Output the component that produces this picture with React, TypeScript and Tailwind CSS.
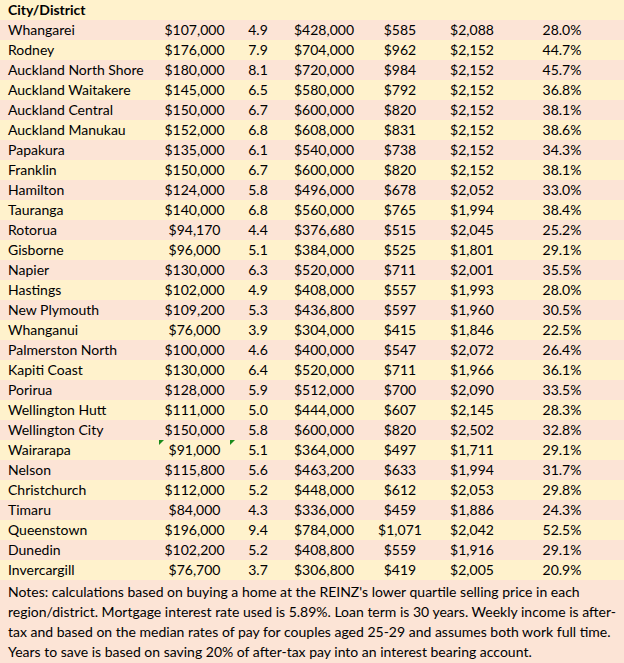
const rows: [string, string, string, string, string, string, string][] = [
  ['Whangarei', '$107,000', '4.9', '$428,000', '$585', '$2,088', '28.0%'],
  ['Rodney', '$176,000', '7.9', '$704,000', '$962', '$2,152', '44.7%'],
  ['Auckland North Shore', '$180,000', '8.1', '$720,000', '$984', '$2,152', '45.7%'],
  ['Auckland Waitakere', '$145,000', '6.5', '$580,000', '$792', '$2,152', '36.8%'],
  ['Auckland Central', '$150,000', '6.7', '$600,000', '$820', '$2,152', '38.1%'],
  ['Auckland Manukau', '$152,000', '6.8', '$608,000', '$831', '$2,152', '38.6%'],
  ['Papakura', '$135,000', '6.1', '$540,000', '$738', '$2,152', '34.3%'],
  ['Franklin', '$150,000', '6.7', '$600,000', '$820', '$2,152', '38.1%'],
  ['Hamilton', '$124,000', '5.8', '$496,000', '$678', '$2,052', '33.0%'],
  ['Tauranga', '$140,000', '6.8', '$560,000', '$765', '$1,994', '38.4%'],
  ['Rotorua', '$94,170', '4.4', '$376,680', '$515', '$2,045', '25.2%'],
  ['Gisborne', '$96,000', '5.1', '$384,000', '$525', '$1,801', '29.1%'],
  ['Napier', '$130,000', '6.3', '$520,000', '$711', '$2,001', '35.5%'],
  ['Hastings', '$102,000', '4.9', '$408,000', '$557', '$1,993', '28.0%'],
  ['New Plymouth', '$109,200', '5.3', '$436,800', '$597', '$1,960', '30.5%'],
  ['Whanganui', '$76,000', '3.9', '$304,000', '$415', '$1,846', '22.5%'],
  ['Palmerston North', '$100,000', '4.6', '$400,000', '$547', '$2,072', '26.4%'],
  ['Kapiti Coast', '$130,000', '6.4', '$520,000', '$711', '$1,966', '36.1%'],
  ['Porirua', '$128,000', '5.9', '$512,000', '$700', '$2,090', '33.5%'],
  ['Wellington Hutt', '$111,000', '5.0', '$444,000', '$607', '$2,145', '28.3%'],
  ['Wellington City', '$150,000', '5.8', '$600,000', '$820', '$2,502', '32.8%'],
  ['Wairarapa', '$91,000', '5.1', '$364,000', '$497', '$1,711', '29.1%'],
  ['Nelson', '$115,800', '5.6', '$463,200', '$633', '$1,994', '31.7%'],
  ['Christchurch', '$112,000', '5.2', '$448,000', '$612', '$2,053', '29.8%'],
  ['Timaru', '$84,000', '4.3', '$336,000', '$459', '$1,886', '24.3%'],
  ['Queenstown', '$196,000', '9.4', '$784,000', '$1,071', '$2,042', '52.5%'],
  ['Dunedin', '$102,200', '5.2', '$408,800', '$559', '$1,916', '29.1%'],
  ['Invercargill', '$76,700', '3.7', '$306,800', '$419', '$2,005', '20.9%'],
];

const notes = [
  "Notes: calculations based on buying a home at the REINZ's lower quartile selling price in each",
  'region/district. Mortgage interest rate used is 5.89%. Loan term is 30 years. Weekly income is after-',
  'tax and based on the median rates of pay for couples aged 25-29 and assumes both work full time.',
  'Years to save is based on saving 20% of after-tax pay into an interest bearing account.',
];

// excel-style green marker in a cell corner
function Flag() {
  return (
    <span className="absolute left-0 top-0 w-0 h-0 border-t-[5px] border-t-[#1a8a1a] border-r-[5px] border-r-transparent" />
  );
}

const grid = 'grid grid-cols-[159px_71px_56px_76px_76px_68px_112px_1fr] h-5 items-center';

export default function App() {
  return (
    <div
      className="w-[624px] h-[663px] bg-[#fff2cc] text-[14px] text-black leading-5 overflow-hidden"
      style={{ fontFamily: 'Lato, "Open Sans", sans-serif' }}
    >
      <div className={grid}>
        <div className="pl-2 font-bold">City/District</div>
      </div>
      {rows.map((r, i) => (
        <div key={r[0]} className={`${grid} ${i % 2 === 0 ? 'bg-[#fce4d6]' : 'bg-[#fff2cc]'}`}>
          <div className="pl-2 whitespace-nowrap">{r[0]}</div>
          {r.slice(1).map((v, j) => (
            <div key={j} className="relative h-5 text-center whitespace-nowrap">
              {r[0] === 'Wairarapa' && j < 2 && <Flag />}
              {v}
            </div>
          ))}
        </div>
      ))}
      <div className="bg-[#fce4d6] px-2 pt-[2px] h-[83px]">
        {notes.map((n) => (
          <div key={n} className="whitespace-nowrap">{n}</div>
        ))}
      </div>
    </div>
  );
}
